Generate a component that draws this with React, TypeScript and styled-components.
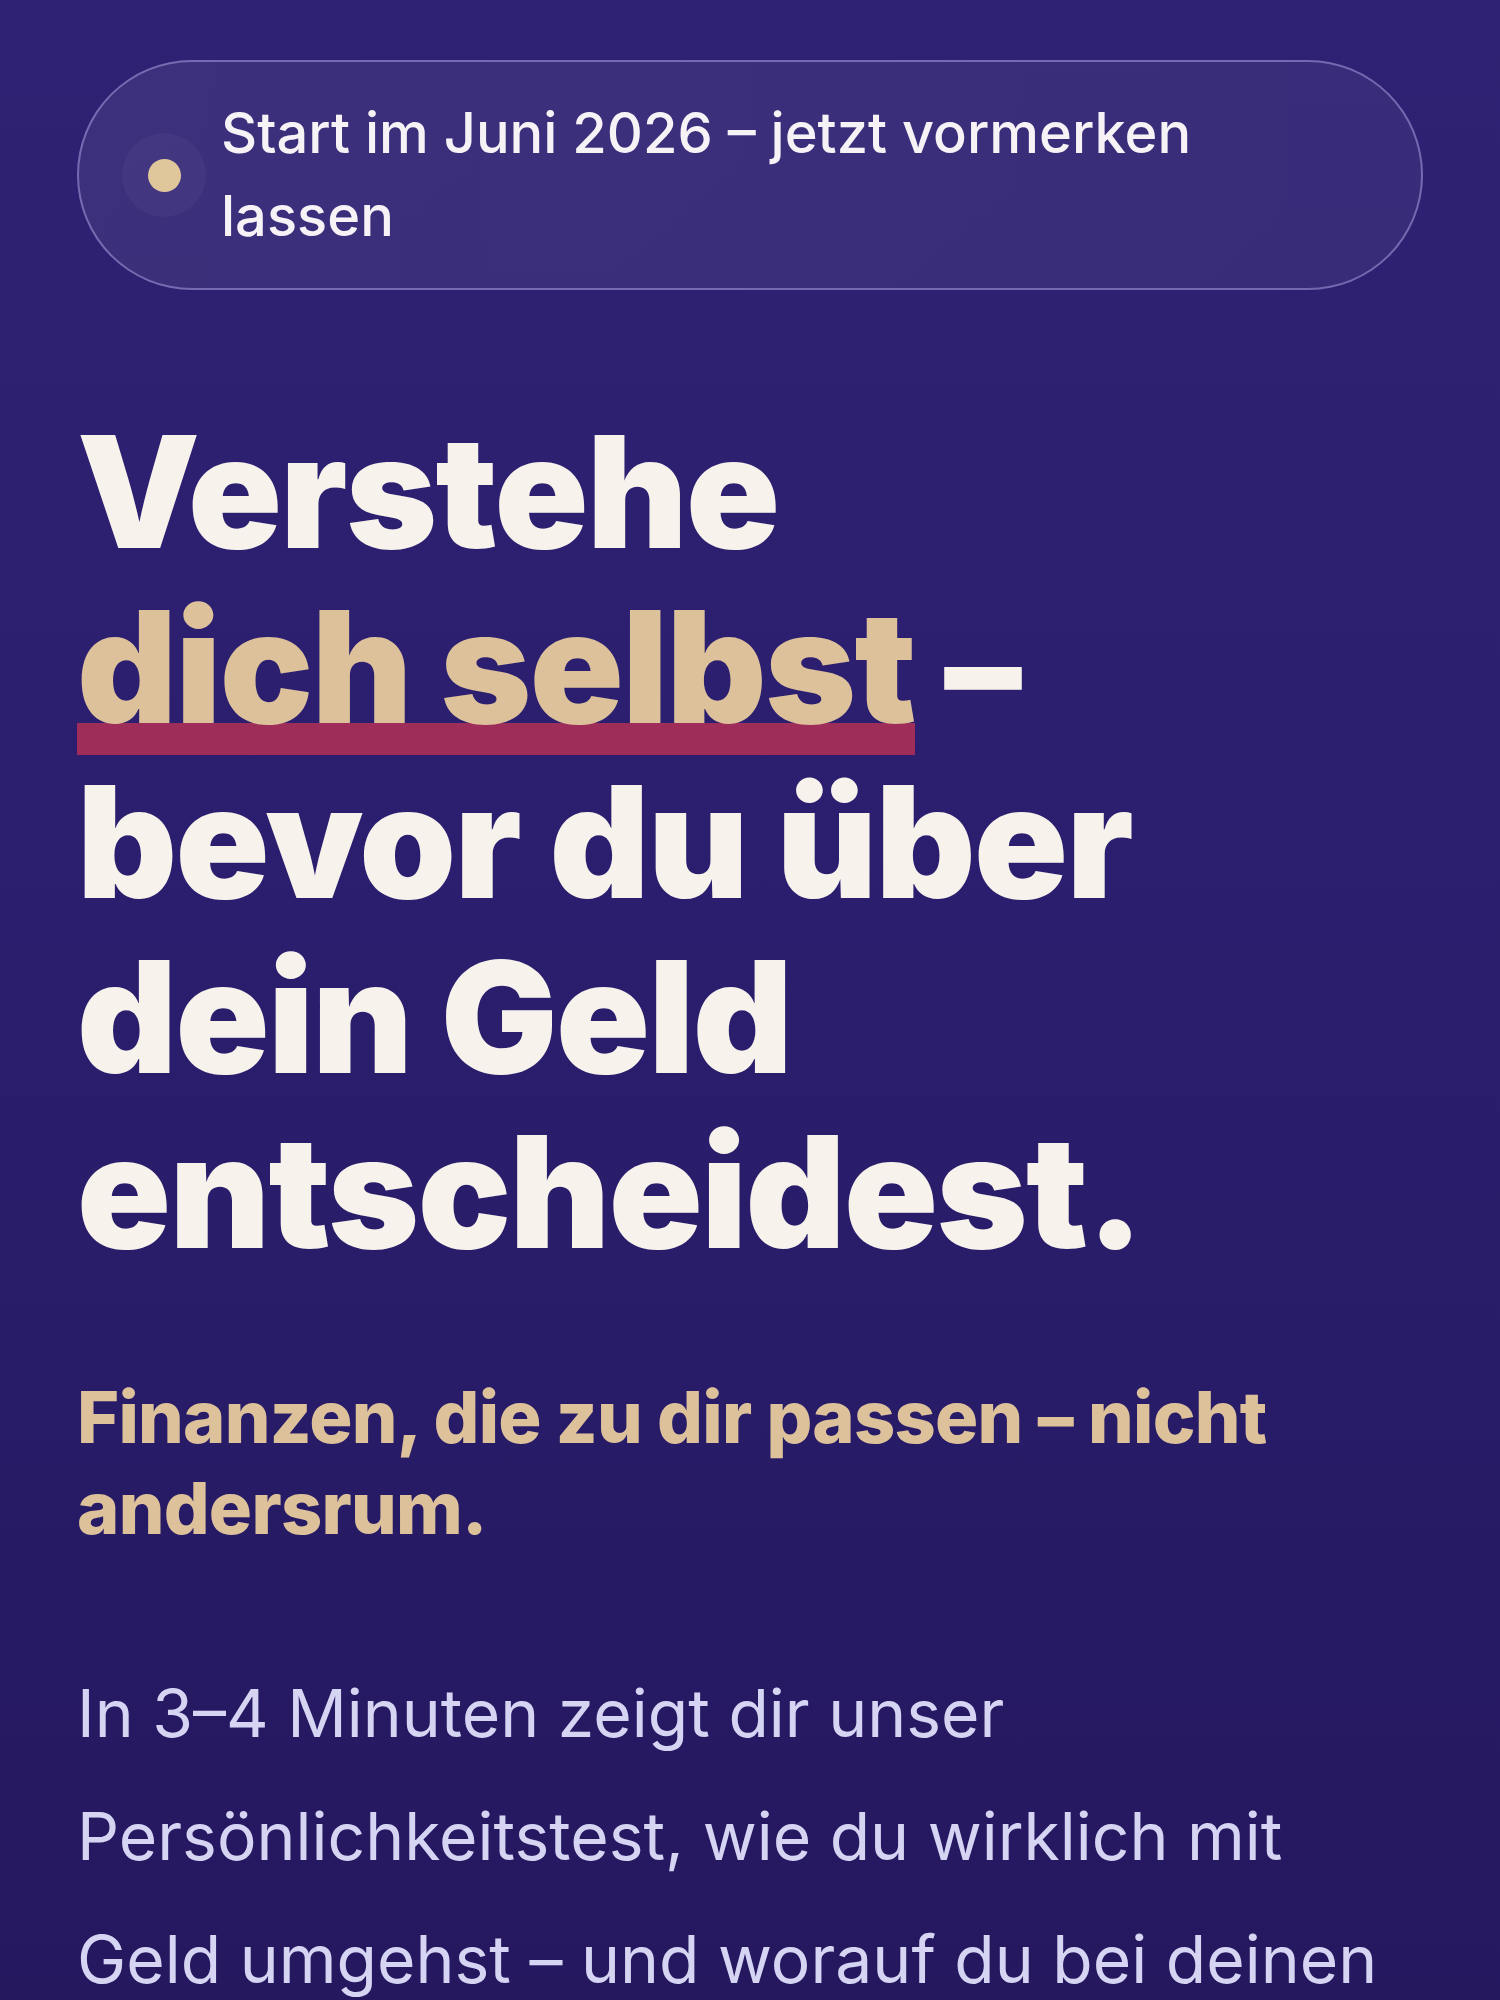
import styled, { createGlobalStyle } from 'styled-components'

const GlobalStyle = createGlobalStyle`
  html, body {
    margin: 0;
    padding: 0;
  }
  body {
    background: #2a1d6c;
    font-family: Inter, "Noto Sans", "Liberation Sans", sans-serif;
    -webkit-font-smoothing: antialiased;
  }
`

const Page = styled.main`
  box-sizing: border-box;
  width: 1500px;
  height: 2000px;
  overflow: hidden;
  padding: 60px 77px 0;
  background: linear-gradient(180deg, #2f2274 0%, #2b1e6e 45%, #25185f 100%);
  display: flex;
  flex-direction: column;

  & > * {
    flex: none;
  }
`

const Badge = styled.div`
  box-sizing: border-box;
  height: 230px;
  display: flex;
  align-items: center;
  gap: 15px;
  padding: 0 60px 0 43px;
  border: 2px solid rgba(170, 155, 220, 0.55);
  border-radius: 999px;
  background: linear-gradient(90deg, rgba(255, 255, 255, 0.07), rgba(255, 255, 255, 0.05));
`

const DotHalo = styled.span`
  flex: none;
  width: 84px;
  height: 84px;
  border-radius: 50%;
  background: rgba(255, 255, 255, 0.035);
  display: flex;
  align-items: center;
  justify-content: center;
`

const Dot = styled.span`
  width: 33px;
  height: 33px;
  border-radius: 50%;
  background: #e0c79b;
`

const BadgeText = styled.p`
  margin: 0;
  max-width: 1030px;
  color: #f6f2f6;
  font-size: 56px;
  font-weight: 500;
  line-height: 83px;
`

const Headline = styled.h1`
  margin: 114px 0 0;
  color: #f7f3ec;
  font-size: 155px;
  font-weight: 900;
  line-height: 175px;
  letter-spacing: -0.01em;
`

const Highlight = styled.span`
  color: #dcc19b;
  background-image: linear-gradient(#9e2d5a, #9e2d5a);
  background-repeat: no-repeat;
  background-size: 100% 32px;
  background-position: 0 calc(100% - 5px);
`

const Tagline = styled.p`
  margin: 92px 0 0;
  color: #dcc19b;
  font-size: 72px;
  font-weight: 800;
  line-height: 91px;
  letter-spacing: -0.01em;
`

const Lead = styled.p`
  margin: 99px 0 0;
  color: #d6d4f3;
  font-size: 66px;
  font-weight: 400;
  line-height: 123px;
`

export default function App() {
  return (
    <>
      <GlobalStyle />
      <Page>
        <Badge>
          <DotHalo>
            <Dot />
          </DotHalo>
          <BadgeText>Start im Juni 2026 – jetzt vormerken lassen</BadgeText>
        </Badge>

        <Headline>
          Verstehe
          <br />
          <Highlight>dich selbst</Highlight> –
          <br />
          bevor du über
          <br />
          dein Geld
          <br />
          entscheidest.
        </Headline>

        <Tagline>Finanzen, die zu dir passen – nicht andersrum.</Tagline>

        <Lead>
          In 3–4 Minuten zeigt dir unser Persönlichkeitstest, wie du wirklich mit Geld umgehst – und
          worauf du bei deinen Finanzen achten solltest.
        </Lead>
      </Page>
    </>
  )
}
